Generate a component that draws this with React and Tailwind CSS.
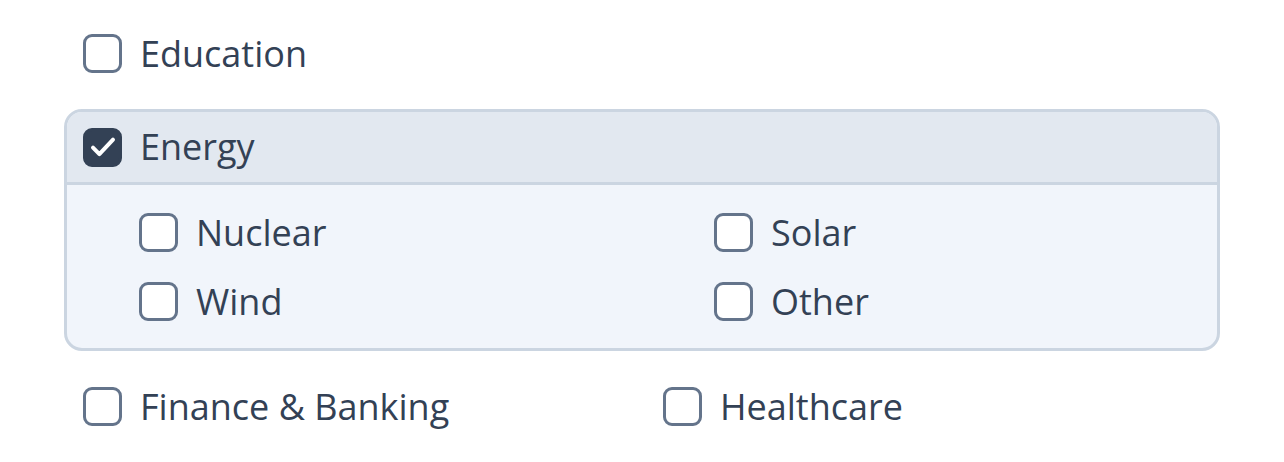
import React, { useState } from 'react';

const Box = ({ checked }) => (
    <span
        className={
            checked
                ? 'flex w-[39px] h-[39px] shrink-0 items-center justify-center rounded-[9px] bg-[#334155] border-[3px] border-[#334155]'
                : 'flex w-[39px] h-[39px] shrink-0 items-center justify-center rounded-[9px] border-[3px] border-[#64748b] bg-white'
        }
    >
        {checked && (
            <svg width="32" height="32" viewBox="0 0 24 24" fill="none">
                <path d="M4.5 12.5l4.8 4.8L19.5 6.5" stroke="#fff" strokeWidth="3" strokeLinecap="round" strokeLinejoin="round" />
            </svg>
        )}
    </span>
);

const Item = ({ label, checked, onToggle }) => (
    <label className="flex items-center gap-[18px] cursor-pointer select-none" onClick={onToggle}>
        <Box checked={checked} />
        <span className="text-[36px] leading-none text-[#334155]">{label}</span>
    </label>
);

export default function App() {
    const [checked, setChecked] = useState({ Energy: true });
    const toggle = (k) => setChecked((c) => ({ ...c, [k]: !c[k] }));

    return (
        <div className="w-[1284px] h-[462px] bg-white pl-[64px] pr-[64px] pt-[34px]" style={{ fontFamily: '"Open Sans", "Noto Sans", sans-serif' }}>
            <div className="px-[19px]">
                <Item label="Education" checked={!!checked.Education} onToggle={() => toggle('Education')} />
            </div>

            <div className="mt-[36px] rounded-[18px] border-[3px] border-[#cbd5e1] overflow-hidden bg-[#f1f5fb]">
                <div className="h-[73px] flex items-center px-[16px] bg-[#e2e8f0] border-b-[3px] border-[#cbd5e1]">
                    <Item label="Energy" checked={!!checked.Energy} onToggle={() => toggle('Energy')} />
                </div>
                <div className="grid grid-cols-[575px_1fr] gap-y-[30px] pl-[72px] pt-[28px] pb-[27px]">
                    {['Nuclear', 'Solar', 'Wind', 'Other'].map((k) => (
                        <Item key={k} label={k} checked={!!checked[k]} onToggle={() => toggle(k)} />
                    ))}
                </div>
            </div>

            <div className="mt-[36px] px-[19px] grid grid-cols-[580px_1fr]">
                <Item label="Finance & Banking" checked={!!checked.Finance} onToggle={() => toggle('Finance')} />
                <Item label="Healthcare" checked={!!checked.Healthcare} onToggle={() => toggle('Healthcare')} />
            </div>
        </div>
    );
}
